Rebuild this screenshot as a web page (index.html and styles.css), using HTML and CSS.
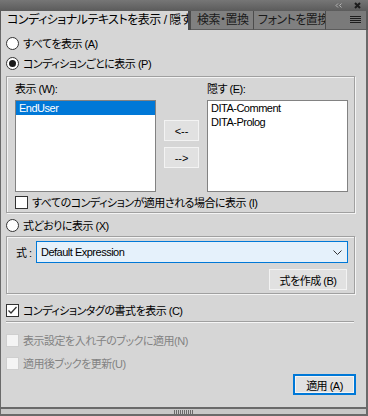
FILE: index.html
```html
<!DOCTYPE html>
<html lang="ja">
<head>
    <meta charset="UTF-8">
    <title>コンディショナルテキストを表示 / 隠す</title>
    <link rel="stylesheet" href="styles.css">
</head>
<body>
    <div class="panel">
        <div class="titlebar">
            <svg class="collapse" width="7" height="5" viewBox="0 0 7 5">
                <polyline points="3,0.5 1,2.5 3,4.5" fill="none" stroke="#b4b4b4" stroke-width="1"/>
                <polyline points="6.5,0.5 4.5,2.5 6.5,4.5" fill="none" stroke="#b4b4b4" stroke-width="1"/>
            </svg>
            <svg class="close" width="7" height="7" viewBox="0 0 7 7">
                <path d="M1 1 L6 6 M6 1 L1 6" stroke="#1c1c1c" stroke-width="2"/>
            </svg>
        </div>

        <div class="tabbar">
            <div class="tab active">コンディショナルテキストを表示 / 隠す</div>
            <div class="tab">検索・置換</div>
            <div class="tab">フォントを置換</div>
            <div class="tab-menu">
                <svg width="11" height="8" viewBox="0 0 11 8">
                    <path d="M0 0.5 H11 M0 2.5 H11 M0 4.5 H11 M0 6.5 H11" stroke="#1e1e1e" stroke-width="1"/>
                </svg>
            </div>
        </div>

        <div class="content">
            <label class="option opt-all"><span class="radio"></span>すべてを表示 (A)</label>
            <label class="option opt-cond"><span class="radio checked"></span>コンディションごとに表示 (P)</label>

            <div class="group group-cond">
                <div class="cond-grid">
                    <div class="list-label">表示 (W):</div>
                    <div></div>
                    <div class="list-label">隠す (E):</div>

                    <div class="listbox">
                        <div class="list-item selected">EndUser</div>
                    </div>
                    <div class="move-buttons">
                        <button class="btn btn-move">&lt;--</button>
                        <button class="btn btn-move">--&gt;</button>
                    </div>
                    <div class="listbox">
                        <div class="list-item">DITA-Comment</div>
                        <div class="list-item">DITA-Prolog</div>
                    </div>
                </div>
                <label class="option opt-allcond"><span class="check"></span>すべてのコンディションが適用される場合に表示 (I)</label>
            </div>

            <label class="option opt-expr"><span class="radio"></span>式どおりに表示 (X)</label>

            <div class="group group-expr">
                <div class="expr-row">
                    <span class="expr-label">式 :</span>
                    <div class="select">
                        <span>Default Expression</span>
                        <svg width="9" height="5" viewBox="0 0 9 5">
                            <polyline points="0.5,0.5 4.5,4.5 8.5,0.5" fill="none" stroke="#333" stroke-width="1"/>
                        </svg>
                    </div>
                </div>
                <div class="expr-actions">
                    <button class="btn btn-build">式を作成 (B)</button>
                </div>
            </div>

            <label class="option opt-format">
                <span class="check">
                    <svg width="11" height="11" viewBox="0 0 11 11">
                        <polyline points="1.5,5.5 4,8 9.5,2" fill="none" stroke="#333" stroke-width="1.3"/>
                    </svg>
                </span>コンディションタグの書式を表示 (C)
            </label>

            <div class="separator"></div>

            <label class="option disabled opt-nested"><span class="check"></span>表示設定を入れ子のブックに適用(N)</label>
            <label class="option disabled opt-update"><span class="check"></span>適用後ブックを更新(U)</label>

            <button class="btn btn-apply">適用 (A)</button>
        </div>

        <div class="grip"><span class="grip-lines"></span></div>
    </div>
</body>
</html>
```

FILE: styles.css
```css
body {
    margin: 0;
    font-family: "Liberation Sans", "Noto Sans CJK JP", sans-serif;
    font-size: 11px;
    font-feature-settings: "palt";
    letter-spacing: -0.5px;
    color: #000;
}

.panel {
    width: 368px;
    height: 416px;
    display: flex;
    flex-direction: column;
    background: #d6d6d6;
}

/* barra superior */
.titlebar {
    height: 11px;
    background: linear-gradient(#767676, #5b5b5b);
    display: flex;
    align-items: center;
    justify-content: flex-end;
    padding-right: 7px;
    gap: 12px;
}

.tabbar {
    height: 19px;
    display: flex;
    background: #7a7a7a;
    border-left: 1px solid #5a5a5a;
    border-right: 2px solid #5a5a5a;
    font-size: 12px;
}

.tab {
    box-sizing: border-box;
    height: 19px;
    line-height: 18px;
    padding: 0 4px;
    white-space: nowrap;
    overflow: hidden;
    color: #1a1a1a;
    background: #808080;
    border-right: 1px solid #4c4c4c;
    border-bottom: 1px solid #5c5c5c;
}

.tab.active {
    width: 190px;
    padding-left: 6px;
    background: #d6d6d6;
    color: #000;
    border-bottom: none;
    border-right: 3px solid #4c4c4c;
}

.tab:nth-child(2) {
    width: 63px;
    padding-left: 6px;
}

.tab:nth-child(3) {
    width: 72px;
}

.tab-menu {
    flex: 1;
    display: flex;
    align-items: center;
    justify-content: flex-end;
    padding-right: 5px;
    border-bottom: 1px solid #5c5c5c;
}

/* contenido */
.content {
    box-sizing: border-box;
    height: 377px;
    display: flex;
    flex-direction: column;
    padding-left: 5px;
    border-left: 1px solid #6a6a6a;
    border-right: 2px solid #6a6a6a;
}

.option {
    display: flex;
    align-items: center;
    height: 16px;
    gap: 4px;
    white-space: nowrap;
}

.option.disabled {
    color: #838383;
}

.radio {
    box-sizing: border-box;
    width: 13px;
    height: 13px;
    border: 1px solid #333;
    border-radius: 50%;
    background: white;
    display: flex;
    align-items: center;
    justify-content: center;
}

.radio.checked::after {
    content: "";
    width: 7px;
    height: 7px;
    border-radius: 50%;
    background: #1a1a1a;
}

.check {
    box-sizing: border-box;
    width: 13px;
    height: 13px;
    border: 1px solid #333;
    background: white;
    display: flex;
    align-items: center;
    justify-content: center;
}

.disabled .check {
    border-color: #cfcfcf;
    background: #f4f4f4;
}

.opt-all { margin-top: 5px; }
.opt-cond { margin-top: 4px; }
.opt-expr { margin-top: 4px; }
.opt-format { margin-top: 8px; }
.opt-nested { margin-top: 9px; }
.opt-update { margin-top: 7px; }

.group {
    box-sizing: border-box;
    width: 349px;
    border: 1px solid #a0a0a0;
    box-shadow: inset 1px 1px 0 #f4f4f4, 1px 1px 0 #f4f4f4;
}

.group-cond {
    margin-top: 5px;
    padding: 4px 6px 2px 8px;
}

.cond-grid {
    display: grid;
    grid-template-columns: 141px 51px 141px;
    grid-template-rows: 16px 92px;
    row-gap: 3px;
}

.list-label {
    line-height: 16px;
}

.listbox {
    box-sizing: border-box;
    background: white;
    border: 1px solid #828282;
}

.list-item {
    height: 14px;
    line-height: 14px;
    padding-left: 3px;
}

.list-item.selected {
    background: #0078d7;
    color: white;
}

.move-buttons {
    display: flex;
    flex-direction: column;
    align-items: center;
    gap: 6px;
    padding-top: 20px;
}

.btn {
    box-sizing: border-box;
    font: inherit;
    font-feature-settings: "palt";
    letter-spacing: -0.5px;
    color: #000;
    background: #e1e1e1;
    border: 1px solid #f3f3f3;
    padding: 0;
}

.btn-move {
    width: 35px;
    height: 21px;
    letter-spacing: 0;
}

.opt-allcond {
    margin-top: 2px;
}

.group-expr {
    margin-top: 3px;
    padding: 4px 6px 3px 9px;
}

.expr-row {
    display: flex;
    align-items: center;
}

.expr-label {
    width: 20px;
}

.select {
    box-sizing: border-box;
    flex: 1;
    height: 22px;
    display: flex;
    align-items: center;
    justify-content: space-between;
    padding: 0 5px 0 4px;
    background: #e5f1fb;
    border: 1px solid #0078d7;
}

.expr-actions {
    display: flex;
    justify-content: flex-end;
    margin-top: 6px;
    padding-right: 1px;
}

.btn-build {
    width: 78px;
    height: 21px;
}

.separator {
    width: 348px;
    margin-top: 3px;
    border-top: 1px solid #a0a0a0;
    border-bottom: 1px solid #f6f6f6;
}

.btn-apply {
    align-self: flex-end;
    margin: 3px 10px 0 0;
    width: 63px;
    height: 21px;
    border: 2px solid #0078d7;
    box-shadow: inset 0 0 0 1px #f4f4f4;
}

/* agarradera inferior */
.grip {
    box-sizing: border-box;
    height: 9px;
    background: #c8c8c8;
    border: 2px solid #6a6a6a;
    border-left-width: 1px;
    display: flex;
    justify-content: center;
    align-items: center;
}

.grip-lines {
    width: 20px;
    height: 4px;
    background: repeating-linear-gradient(90deg, #6a6a6a 0 1px, transparent 1px 2px);
}
```
